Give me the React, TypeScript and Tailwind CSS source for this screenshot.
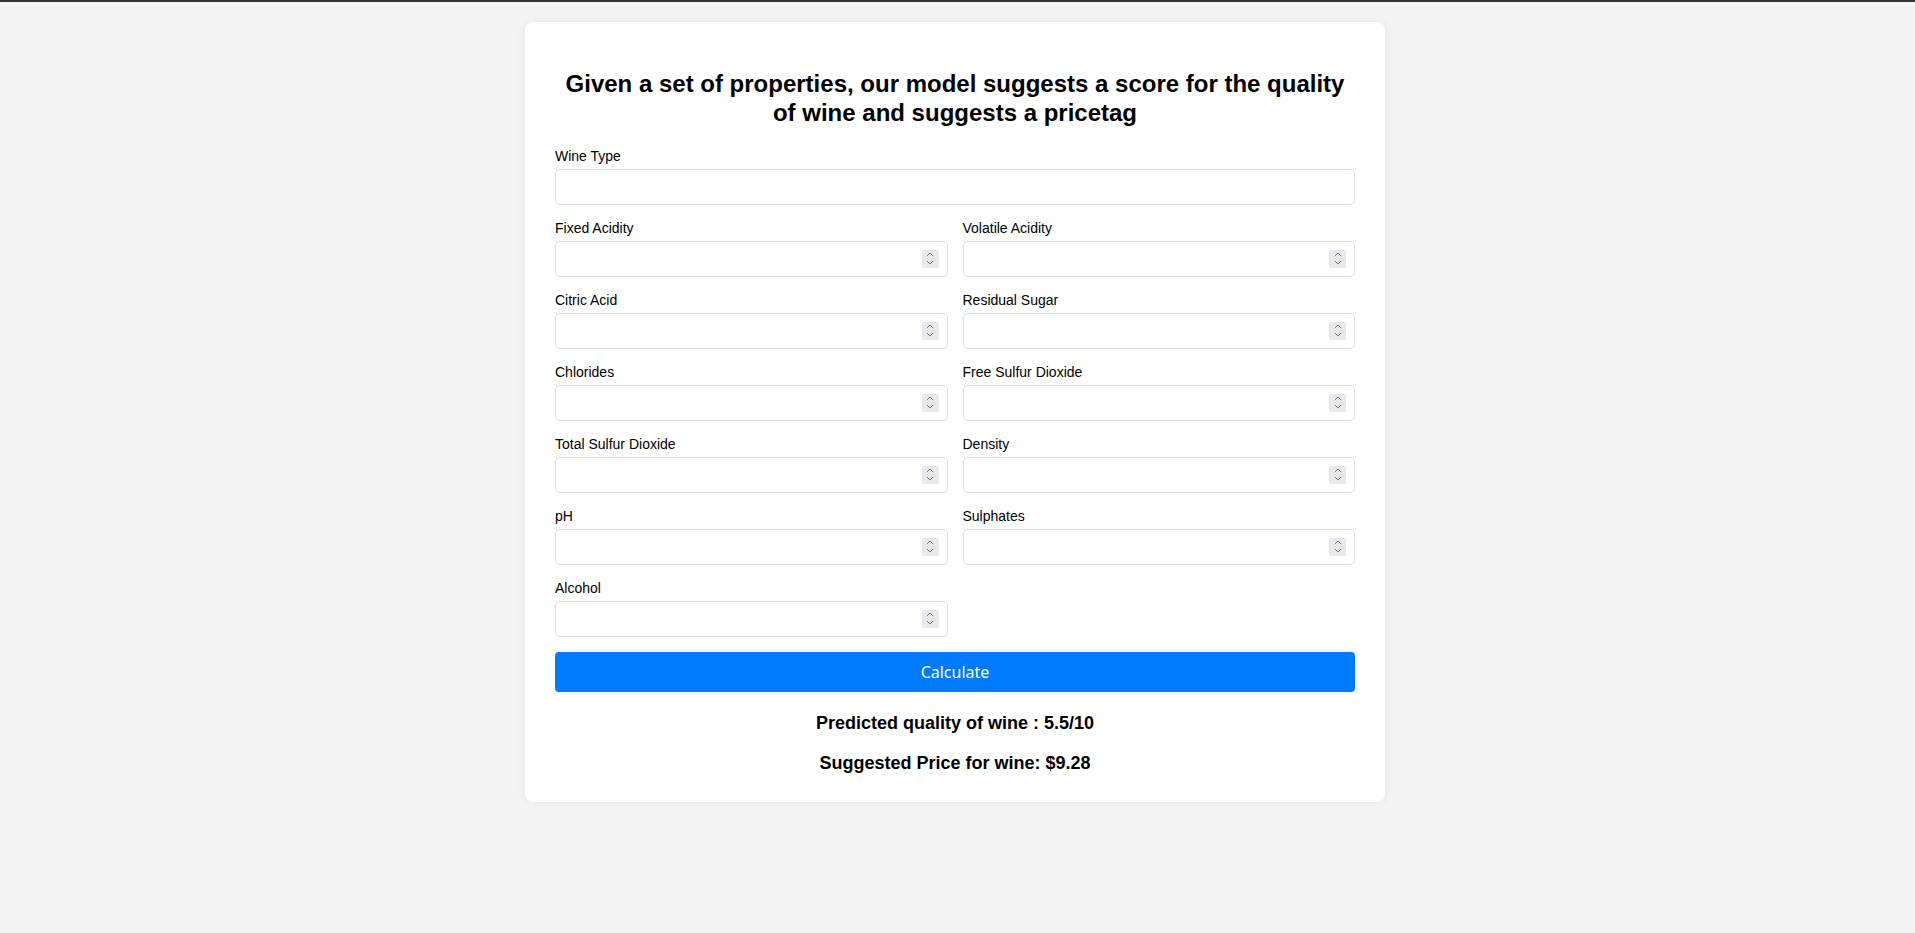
import { FC } from 'react';

const FIELDS = [
  'Fixed Acidity',
  'Volatile Acidity',
  'Citric Acid',
  'Residual Sugar',
  'Chlorides',
  'Free Sulfur Dioxide',
  'Total Sulfur Dioxide',
  'Density',
  'pH',
  'Sulphates',
  'Alcohol',
];

// stepper drawn by hand, headless chrome hides the native one
const Spinner: FC = () => (
  <div className="absolute right-[9px] top-1/2 -translate-y-1/2 w-[17px] h-[18px] bg-[#e9e9ed] rounded-[2px] flex flex-col items-center justify-center gap-[3px]">
    <svg width="8" height="5" viewBox="0 0 8 5" fill="none">
      <path d="M0.8 4.2L4 1L7.2 4.2" stroke="#76767a" strokeWidth="1" />
    </svg>
    <svg width="8" height="5" viewBox="0 0 8 5" fill="none">
      <path d="M0.8 0.8L4 4L7.2 0.8" stroke="#76767a" strokeWidth="1" />
    </svg>
  </div>
);

const Field: FC<{ label: string; numeric?: boolean }> = ({ label, numeric = true }) => (
  <div className="flex flex-col">
    <label className="block text-[14px] leading-[21px] text-black mb-[2px]">{label}</label>
    <div className="relative">
      <input
        type={numeric ? 'number' : 'text'}
        className="w-full h-[36px] bg-white border border-[#dcdcdc] rounded-[5px] px-[10px] text-[14px] focus:outline-none [appearance:textfield] [&::-webkit-inner-spin-button]:appearance-none"
      />
      {numeric && <Spinner />}
    </div>
  </div>
);

const App: FC = () => {
  return (
    <div
      className="min-h-screen bg-[#f4f4f4] border-t-2 border-[#333333] pr-[5px]"
      style={{ fontFamily: '"Liberation Sans", Arial, sans-serif' }}
    >
      <div className="w-[860px] mx-auto mt-[20px] bg-white rounded-[8px] shadow-[0_0_10px_rgba(0,0,0,0.08)] px-[30px] pt-[30px] pb-[25px]">
        <h2 className="mt-[18px] mb-[18px] text-center font-bold text-[24px] leading-[1.2] text-black">
          Given a set of properties, our model suggests a score for the quality of wine and suggests a pricetag
        </h2>

        <form className="grid grid-cols-2 gap-x-[15px] gap-y-[13px]">
          <div className="col-span-2">
            <Field label="Wine Type" numeric={false} />
          </div>
          {FIELDS.map((f) => (
            <Field key={f} label={f} />
          ))}
          <button
            type="button"
            className="col-span-2 mt-[2px] h-[40px] bg-[#007bff] text-white rounded-[4px] text-[16px]"
            style={{ fontFamily: '"Noto Sans", "Open Sans", sans-serif' }}
          >
            Calculate
          </button>
        </form>

        <p className="mt-[18px] text-center font-bold text-[18px] leading-[27px] text-black">
          Predicted quality of wine : 5.5/10
        </p>
        <p className="mt-[13px] text-center font-bold text-[18px] leading-[27px] text-black">
          Suggested Price for wine: $9.28
        </p>
      </div>
    </div>
  );
};

export default App;
